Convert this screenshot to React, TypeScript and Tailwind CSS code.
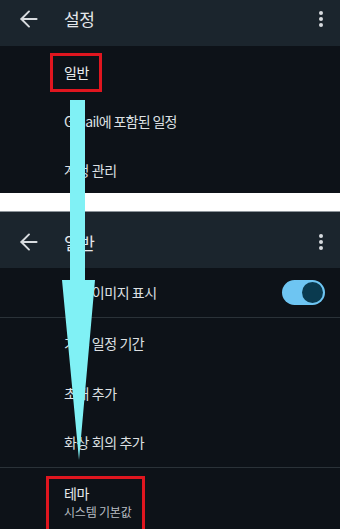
import React from "react";
import { ArrowLeft } from "lucide-react";

function Kebab() {
  return (
    <div className="flex flex-col items-center gap-[2px]">
      <span className="w-[4px] h-[4px] rounded-full bg-[#d7dbde]" />
      <span className="w-[4px] h-[4px] rounded-full bg-[#d7dbde]" />
      <span className="w-[4px] h-[4px] rounded-full bg-[#d7dbde]" />
    </div>
  );
}

function Header({ title, className }: { title: string; className: string }) {
  return (
    <div className={"flex items-center bg-[#1b252d] pl-[16px] pr-[17px] " + className}>
      <ArrowLeft size={26} strokeWidth={1.8} className="text-[#d8dcdf]" />
      <span className="ml-[22px] text-[17px] tracking-[-0.5px] text-[#e4e7ea] leading-none">{title}</span>
      <div className="ml-auto">
        <Kebab />
      </div>
    </div>
  );
}

function Row({ label, className = "" }: { label: string; className?: string }) {
  return (
    <div className={"flex items-center pl-[64px] text-[14px] tracking-[-0.4px] text-[#dde0e3] " + className}>
      {label}
    </div>
  );
}

export default function App() {
  return (
    <div
      className="relative w-[340px] h-[529px] overflow-hidden bg-[#0d1218]"
      style={{ fontFamily: '"Noto Sans CJK KR", "Noto Sans", sans-serif' }}
    >
      <Header title="설정" className="h-[46px] pb-[9px]" />
      <div className="h-[147px] pt-[2px] overflow-hidden">
        <Row label="일반" className="h-[49px] text-[#eceef0]" />
        <Row label="Gmail에 포함된 일정" className="h-[49px] tracking-[-0.7px]" />
        <Row label="계정 관리" className="h-[49px]" />
      </div>
      <div className="h-[19px] bg-white border-b border-[#8d949a]" />
      <Header title="일반" className="h-[56px] pt-[4px]" />
      <div>
        <div className="h-[50px] flex items-center pl-[64px] pr-[15px] border-b border-[#2a3238]">
          <span className="text-[14px] tracking-[-0.4px] text-[#dde0e3]">일정 이미지 표시</span>
          <div className="ml-auto w-[43px] h-[25px] rounded-full bg-[#6ec5f2] flex items-center justify-end pr-[2px]">
            <span className="w-[21px] h-[21px] rounded-full bg-[#0a3a4f]" />
          </div>
        </div>
        <Row label="기본 일정 기간" className="h-[50px]" />
        <Row label="초대 추가" className="h-[50px]" />
        <Row label="화상 회의 추가" className="h-[50px] border-b border-[#2a3238]" />
        <div className="pl-[64px] pt-[15px] flex flex-col">
          <span className="text-[14px] leading-[20px] tracking-[-0.4px] text-[#e6e8eb]">테마</span>
          <span className="text-[12px] leading-[18px] tracking-[-0.2px] text-[#b8bdc2]">시스템 기본값</span>
        </div>
      </div>

      {/* annotations */}
      <div className="absolute left-[50px] top-[53px] w-[52px] h-[39px] border-[3px] border-[#e0161f]" />
      <div className="absolute left-[46px] top-[476px] w-[99px] h-[60px] border-[3px] border-[#e0161f]" />
      <svg className="absolute left-0 top-0 pointer-events-none" width="340" height="529" viewBox="0 0 340 529">
        <polygon points="70,100 85,100 85,280 95,280 79,460 62,280 70,280" fill="#80f1f5" />
      </svg>
    </div>
  );
}
